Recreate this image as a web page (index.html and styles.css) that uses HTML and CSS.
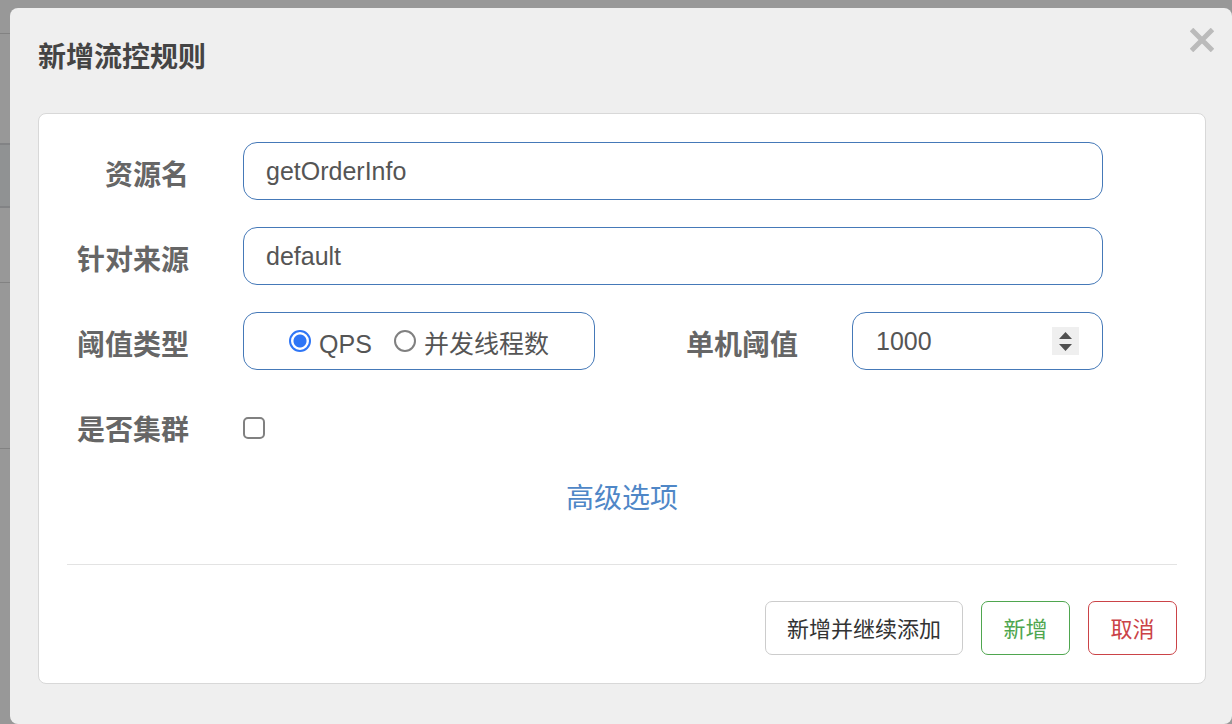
FILE: index.html
```html
<!DOCTYPE html>
<html lang="zh-CN">
<head>
<meta charset="utf-8">
<title>新增流控规则</title>
<link rel="stylesheet" href="styles.css">
</head>
<body>
<div class="page">
  <div class="backdrop" aria-hidden="true">
    <div class="backdrop-toolbar"></div>
    <div class="backdrop-title"></div>
    <div class="backdrop-filter"></div>
    <div class="backdrop-head"></div>
    <div class="backdrop-body"></div>
  </div>
  <main class="dialog" role="dialog" aria-labelledby="dialog-title">
    <header class="dialog-header">
      <h1 class="dialog-title" id="dialog-title">新增流控规则</h1>
      <button class="close" type="button" aria-label="关闭">
        <svg class="close-icon" viewBox="0 0 24 24" aria-hidden="true"><path d="M1.5 1.5 22.500 22.500M22.500 1.500 1.500 22.500" fill="none" stroke="#bbb" stroke-width="5"/></svg>
      </button>
    </header>
    <form class="card">
      <div class="rows">
        <div class="row">
          <label class="label" for="resource">资源名</label>
          <input class="field" id="resource" type="text" value="getOrderInfo">
        </div>
        <div class="row">
          <label class="label" for="origin">针对来源</label>
          <input class="field" id="origin" type="text" value="default">
        </div>
        <div class="row">
          <span class="label" id="grade-label">阈值类型</span>
          <div class="split">
            <div class="field choices" role="radiogroup" aria-labelledby="grade-label">
              <label class="choice"><input class="radio" type="radio" name="grade" checked><span class="choice-text">QPS</span></label>
              <label class="choice"><input class="radio" type="radio" name="grade"><span class="choice-text">并发线程数</span></label>
            </div>
            <label class="label" for="threshold">单机阈值</label>
            <input class="field number" id="threshold" type="number" value="1000">
          </div>
        </div>
        <div class="row">
          <label class="label" for="cluster">是否集群</label>
          <input class="checkbox" id="cluster" type="checkbox">
        </div>
      </div>
      <div class="advanced"><a class="advanced-link" href="#">高级选项</a></div>
      <footer class="actions">
        <button class="button" type="button">新增并继续添加</button>
        <button class="button button-success" type="button">新增</button>
        <button class="button button-danger" type="button">取消</button>
      </footer>
    </form>
  </main>
</div>
</body>
</html>
```
FILE: styles.css
```css
* {
  box-sizing: border-box;
}

body {
  margin: 0;
  background: #989898;
  color: #555;
  font-family: "Liberation Sans", "Noto Sans CJK SC", sans-serif;
  font-size: 25px;
}

.page {
  display: flex;
  min-height: 100vh;
}

.backdrop {
  display: flex;
  flex-direction: column;
  width: 10px;
}

.backdrop > div {
  border-bottom: 1px solid #828282;
}

.backdrop-toolbar {
  height: 34px;
}

.backdrop .backdrop-title {
  height: 111px;
  border-bottom: 2px solid #828385;
}

.backdrop .backdrop-filter {
  height: 63px;
  border-bottom: 2px solid #828385;
  background: #909293;
}

.backdrop-head {
  height: 75px;
}

.backdrop-body {
  height: 166px;
}

.dialog {
  flex: 1;
  margin-top: 8px;
  padding: 30px 26px 40px 28px;
  border-radius: 8px;
  background: #efefef;
}

.dialog-header {
  display: flex;
  justify-content: space-between;
  align-items: flex-start;
  margin-right: -16px;
  margin-bottom: 35px;
}

.dialog-title {
  margin: 0;
  color: #444;
  font-size: 28px;
  line-height: 40px;
}

.close {
  display: flex;
  margin-top: -18px;
  padding: 8px;
  border: 0;
  background: none;
}

.close-icon {
  width: 24px;
  height: 24px;
}

.card {
  padding: 28px;
  border: 1px solid #d8d8d8;
  border-radius: 8px;
  background: #fff;
}

.rows {
  display: grid;
  gap: 27px;
  padding-right: 74px;
}

.row {
  display: grid;
  grid-template-columns: 122px 1fr;
  column-gap: 54px;
  min-height: 58px;
}

.label {
  padding-top: 14px;
  color: #666;
  font-size: 28px;
  font-weight: 700;
  line-height: 40px;
  text-align: right;
  white-space: nowrap;
}

.field {
  width: 100%;
  min-width: 0;
  height: 58px;
  padding: 0 22px;
  border: 1px solid #4579b8;
  border-radius: 14px;
  background: #fff;
  color: #555;
  font: inherit;
}

.split {
  display: grid;
  grid-template-columns: 352fr 203fr 54px 251fr;
}

.number {
  grid-column: 4;
  padding: 0 23px;
}

.choices {
  display: flex;
  justify-content: center;
  align-items: center;
  gap: 22px;
}

.choice {
  display: flex;
  align-items: center;
  gap: 8px;
}

.choice-text {
  padding-top: 6px;
  line-height: 36px;
  white-space: nowrap;
}

.radio,
.checkbox {
  width: 22px;
  height: 22px;
  margin: 0;
  border: 2px solid #808080;
  background: #fff;
  appearance: none;
}

.radio {
  border-radius: 50%;
}

.radio:checked {
  border-color: #2f76f6;
  background: radial-gradient(circle, #2f76f6 6px, #fff 7px);
}

.checkbox {
  margin-top: 20px;
  border-radius: 5px;
}

.checkbox:checked {
  border-color: #2f76f6;
  background: #2f76f6;
}

.number::-webkit-inner-spin-button {
  width: 27px;
  height: 28px;
  opacity: 1;
  appearance: none;
  background: #efefef url("data:image/svg+xml,%3Csvg xmlns='http://www.w3.org/2000/svg' viewBox='0 0 27 28'%3E%3Cpath d='M7 12 13.500 5 20 12zM7 17 13.500 24 20 17z' fill='%23505050'/%3E%3C/svg%3E") center / 27px 28px no-repeat;
}

.advanced {
  padding: 24px 0 45px;
  border-bottom: 1px solid #e3e3e3;
  text-align: center;
}

.advanced-link {
  color: #4f87c7;
  font-size: 28px;
  line-height: 40px;
  text-decoration: none;
}

.actions {
  display: flex;
  justify-content: flex-end;
  gap: 18px;
  padding-top: 36px;
}

.button {
  min-width: 89px;
  height: 54px;
  padding: 0 21px 3px;
  border: 1px solid #ccc;
  border-radius: 7px;
  background: #fff;
  color: #333;
  font: inherit;
  font-size: 22px;
}

.button-success {
  border-color: #4fa64f;
  color: #4fa64f;
}

.button-danger {
  border-color: #cb4347;
  color: #cb4347;
}
```
